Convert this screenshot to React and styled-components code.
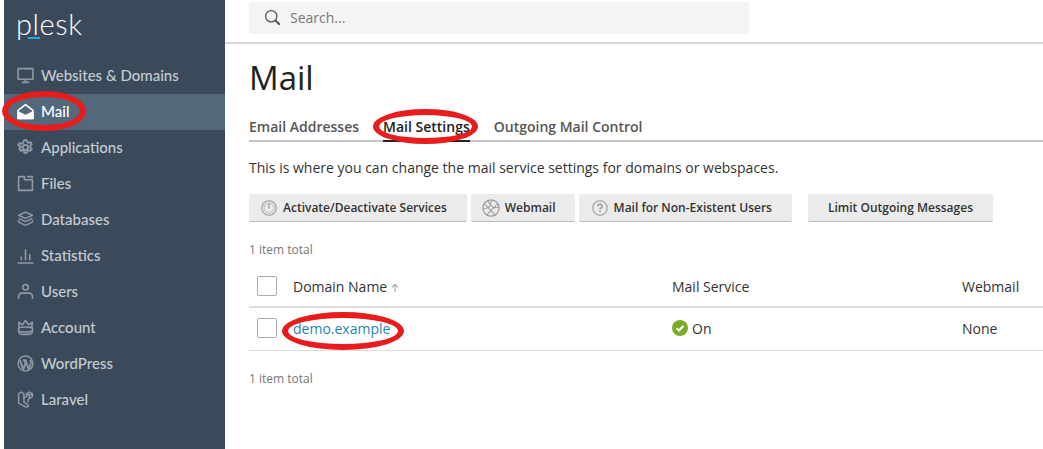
import React from 'react'
import styled, { createGlobalStyle } from 'styled-components'

const Global = createGlobalStyle`
  html, body { margin: 0; padding: 0; background: #fff; }
  body { font-family: "Open Sans", "Liberation Sans", sans-serif; color: #222; overflow: hidden; }
`

const Page = styled.div`
  position: relative;
  width: 1043px;
  height: 449px;
  overflow: hidden;
  display: grid;
  padding-left: 4px;
  box-sizing: border-box;
  grid-template-columns: 221px 1fr;
`

/* sidebar */
const Sidebar = styled.aside`
  background: #3b4a5a;
  display: flex;
  flex-direction: column;
`
const Logo = styled.div`
  height: 58px;
  padding: 4px 0 0 12px;
  box-sizing: border-box;
  position: relative;
  font-family: "Lato", sans-serif;
  font-weight: 300;
  font-size: 29px;
  line-height: 40px;
  letter-spacing: 0.6px;
  color: #fff;
`
const LogoBar = styled.span`
  position: absolute;
  left: 24px;
  top: 37px;
  width: 12px;
  height: 2px;
  background: #28aade;
`
const NavItem = styled.div`
  height: 36px;
  box-sizing: border-box;
  padding: 0 0 2px 13px;
  display: flex;
  align-items: center;
  gap: 7px;
  font-family: "Lato", sans-serif;
  font-size: 15px;
  font-weight: 500;
  color: ${p => (p.$active ? '#fff' : '#c6ccd2')};
  background: ${p => (p.$active ? '#54687c' : 'transparent')};
  svg { width: 17px; height: 17px; flex: none; color: ${p => (p.$active ? '#fff' : '#8f9aa5')}; }
`

/* main column */
const Main = styled.main`
  display: flex;
  flex-direction: column;
  min-width: 0;
`
const TopBar = styled.div`
  height: 44px;
  box-sizing: border-box;
  border-bottom: 2px solid #d8d8d8;
  padding: 2px 0 0 24px;
`
const SearchBox = styled.div`
  width: 500px;
  height: 32px;
  box-sizing: border-box;
  background: #f4f4f4;
  border-radius: 3px;
  display: flex;
  align-items: center;
  gap: 9px;
  padding: 0 0 2px 15px;
  font-size: 14px;
  color: #777;
  svg { width: 17px; height: 17px; color: #555; }
`
const Content = styled.div`
  padding: 0 0 0 24px;
  display: flex;
  flex-direction: column;
`
const Title = styled.h1`
  margin: 11px 0 0;
  font-size: 33px;
  line-height: 46px;
  font-weight: 400;
  color: #222;
`
const Tabs = styled.div`
  margin-top: 13px;
  height: 28px;
  box-sizing: border-box;
  display: flex;
  gap: 24px;
  border-bottom: 2px solid #c4c4c4;
`
const Tab = styled.div`
  height: 28px;
  box-sizing: border-box;
  font-size: 14px;
  font-weight: 600;
  line-height: 20px;
  padding-top: 3px;
  color: ${p => (p.$active ? '#222' : '#555')};
  border-bottom: 2px solid ${p => (p.$active ? '#222' : 'transparent')};
`
const Hint = styled.p`
  margin: 16px 0 0;
  font-size: 14px;
  line-height: 20px;
  color: #333;
`
const Toolbar = styled.div`
  margin-top: 16px;
  display: flex;
  gap: 4px;
`
const Button = styled.div`
  height: 28px;
  box-sizing: border-box;
  padding: 0 ${p => p.$right ?? 20}px 0 ${p => p.$left ?? 12}px;
  margin-left: ${p => (p.$gap ? '12px' : '0')};
  display: flex;
  align-items: center;
  gap: ${p => p.$iconGap ?? 6}px;
  background: #ebebeb;
  border-bottom: 1px solid #bbb;
  border-radius: 2px;
  font-size: 12px;
  font-weight: 600;
  color: #333;
  svg { width: ${p => p.$icon ?? 16}px; height: ${p => p.$icon ?? 16}px; color: #999; }
`
const Total = styled.div`
  font-size: 12px;
  line-height: 16px;
  color: #777;
  margin-top: ${p => p.$top}px;
`
const TableRow = styled.div`
  margin-top: ${p => p.$top || 0}px;
  height: ${p => p.$h}px;
  box-sizing: border-box;
  display: grid;
  grid-template-columns: 36px 379px 290px 1fr;
  align-items: center;
  padding: 0 0 ${p => p.$drop || 0}px 8px;
  border-bottom: ${p => p.$line};
  font-size: 14px;
  color: #333;
`
const Check = styled.span`
  display: block;
  width: 20px;
  height: 20px;
  box-sizing: border-box;
  border: 1px solid #aaa;
  border-radius: 2px;
  background: #fff;
`
const SortHead = styled.span`
  display: flex;
  align-items: center;
  gap: 4px;
  svg { width: 8px; height: 9px; margin-top: 2px; color: #aaa; }
`
const DomainLink = styled.a`
  color: #1f85b5;
`
const Status = styled.span`
  display: flex;
  align-items: center;
  gap: 4px;
  svg { width: 16px; height: 16px; }
`

/* the red annotation rings sit over the page */
const Ring = styled.span`
  position: absolute;
  left: ${p => p.$x}px;
  top: ${p => p.$y}px;
  width: ${p => p.$w}px;
  height: ${p => p.$h}px;
  box-sizing: border-box;
  border: 6px solid #e81c1c;
  border-radius: 50%;
  pointer-events: none;
`

const Svg = ({ children, w = 1.5 }) => (
  <svg viewBox="0 0 16 16" fill="none" stroke="currentColor" strokeWidth={w} strokeLinejoin="round">
    {children}
  </svg>
)

const icons = {
  monitor: <Svg><rect x="1" y="1.500" width="14" height="10" /><path d="M4.500 14.500h7M8 11.500v3" strokeWidth="1.800" /></Svg>,
  mail: (
    <svg viewBox="0 0 16 16" fill="none" stroke="currentColor" strokeWidth="1.500" strokeLinejoin="round">
      <path d="M1 7 8 1.500 15 7v7.500H1z" />
      <path d="M1 8.500 8 12l7-3.500v6H1z" fill="currentColor" />
    </svg>
  ),
  gear: (
    <Svg w={1.7}>
      <circle cx="8" cy="8" r="2.400" />
      <path d="M6.800 1h2.400l.4 2 1.200.6 1.900-.8 1.200 2.100-1.500 1.300v1.600l1.500 1.300-1.200 2.100-1.900-.8-1.200.6-.4 2H6.800l-.4-2-1.200-.6-1.900.8-1.200-2.100 1.500-1.300V7.200L1.100 5.900l1.200-2.100 1.900.8 1.200-.6z" />
    </Svg>
  ),
  folder: <Svg><path d="M1.500 14.500v-13h5.500v3h7.500v10z" /><path d="M9.500 1.500h5v1.500" /></Svg>,
  db: (
    <Svg w={1.4}>
      <path d="M8 1 14.500 4 8 7 1.500 4z" />
      <path d="M1.500 7 8 10l6.500-3M1.500 10.500 8 13.500l6.500-3M1.500 8.500v2M14.500 8.500v2" />
    </Svg>
  ),
  stats: <Svg><path d="M.500 15h15M4 12.500V9M8 12.500V2M12 12.500V6.500" /></Svg>,
  user: <Svg><circle cx="8" cy="4" r="2.600" /><path d="M1.500 15v-2.500c0-1.500 1.500-3 3-3h7c1.500 0 3 1.500 3 3V15" /></Svg>,
  crown: (
    <Svg>
      <path d="M2.200 8 1.500 3 5 5.500 8 1.500l3 4L14.500 3 13.800 8" />
      <path d="M1.500 8.500c3-1.200 10-1.200 13 0v3c0 2-2 3-3.500 3H5c-1.500 0-3.500-1-3.500-3z" />
      <path d="M2 11.500c3 1 9 1 12 0" />
    </Svg>
  ),
  wp: (
    <Svg w={1.3}>
      <circle cx="8" cy="8" r="7" />
      <path d="M2.800 5 6 13.500 8 8 6.800 4.800M5.500 4.800h3M8 4.800l3 8.700 2-5.500c.5-1.500 0-2.500-.8-3.200" strokeWidth="1.700" />
    </Svg>
  ),
  laravel: (
    <Svg w={1.4}>
      <path d="M1.500 2.500 4 1l2.500 1.500v8l4 2.500v1.500L8 15l-6.500-3.500z" />
      <path d="M6.500 6.500 9 5V2.500L11.500 1 14.500 2.500v2.800L10.500 8v2.500" />
      <path d="M9 2.500 11.500 4l3-1.500M11.500 4v2.500" />
    </Svg>
  ),
  search: <Svg w={1.2}><circle cx="6.800" cy="6.800" r="5.300" /><path d="m10.800 10.800 4 4" strokeWidth="2" /></Svg>,
  power: <Svg w={1.1}><circle cx="8" cy="8" r="7.200" /><circle cx="8" cy="8" r="5" strokeWidth=".6" /><path d="M8 3.800V8.500" strokeWidth="1.300" /></Svg>,
  globe: <Svg w={1}><circle cx="8" cy="8" r="7.200" /><path d="M2 4 12 14.500M14 4 4 14.500M5 1.500 10 8l5.200-1M.8 9l5.200-1.500L9 .8" strokeWidth=".9" /></Svg>,
  question: (
    <Svg w={1.1}>
      <circle cx="8" cy="8" r="7.200" />
      <path d="M5.800 6.300c0-2.900 4.400-2.900 4.400 0 0 1.600-2.200 1.600-2.200 3.300M8 10.800v1.500" strokeWidth="1.500" />
    </Svg>
  ),
  sortUp: (
    <svg viewBox="0 0 8 9" fill="none" stroke="currentColor" strokeWidth="1.200">
      <path d="M4 9V1.500M1 4.300 4 1.300l3 3" />
    </svg>
  ),
}

const nav = [
  ['monitor', 'Websites & Domains'],
  ['mail', 'Mail', true],
  ['gear', 'Applications'],
  ['folder', 'Files'],
  ['db', 'Databases'],
  ['stats', 'Statistics'],
  ['user', 'Users'],
  ['crown', 'Account'],
  ['wp', 'WordPress'],
  ['laravel', 'Laravel'],
]

const App = () => (
  <>
    <Global />
    <Page>
      <Sidebar>
        <Logo>plesk<LogoBar /></Logo>
        {nav.map(([icon, label, active]) => (
          <NavItem key={label} $active={active}>{icons[icon]}{label}</NavItem>
        ))}
      </Sidebar>
      <Main>
        <TopBar>
          <SearchBox>{icons.search}Search...</SearchBox>
        </TopBar>
        <Content>
          <Title>Mail</Title>
          <Tabs>
            <Tab>Email Addresses</Tab>
            <Tab $active>Mail Settings</Tab>
            <Tab>Outgoing Mail Control</Tab>
          </Tabs>
          <Hint>This is where you can change the mail service settings for domains or webspaces.</Hint>
          <Toolbar>
            <Button>{icons.power}Activate/Deactivate Services</Button>
            <Button $left={11} $right={19} $icon={18} $iconGap={5}>{icons.globe}Webmail</Button>
            <Button $left={13}>{icons.question}Mail for Non-Existent Users</Button>
            <Button $left={20} $gap>Limit Outgoing Messages</Button>
          </Toolbar>
          <Total $top={20}>1 item total</Total>
          <TableRow $top={8} $h={42} $line="2px solid #ddd">
            <Check />
            <SortHead>Domain Name{icons.sortUp}</SortHead>
            <span>Mail Service</span>
            <span>Webmail</span>
          </TableRow>
          <TableRow $h={43} $drop={2} $line="1px solid #ddd">
            <Check />
            <DomainLink>demo.example</DomainLink>
            <Status>
              <svg viewBox="0 0 16 16">
                <circle cx="8" cy="8" r="8" fill="#7cab2a" />
                <path d="M4.500 8.200 7 10.500l4.500-4.700" fill="none" stroke="#fff" strokeWidth="2" />
              </svg>
              On
            </Status>
            <span>None</span>
          </TableRow>
          <Total $top={20}>1 item total</Total>
        </Content>
      </Main>
      <Ring $x={2} $y={91} $w={84} $h={40} />
      <Ring $x={373} $y={109} $w={105} $h={35} />
      <Ring $x={282} $y={312} $w={122} $h={38} />
    </Page>
  </>
)

export default App
